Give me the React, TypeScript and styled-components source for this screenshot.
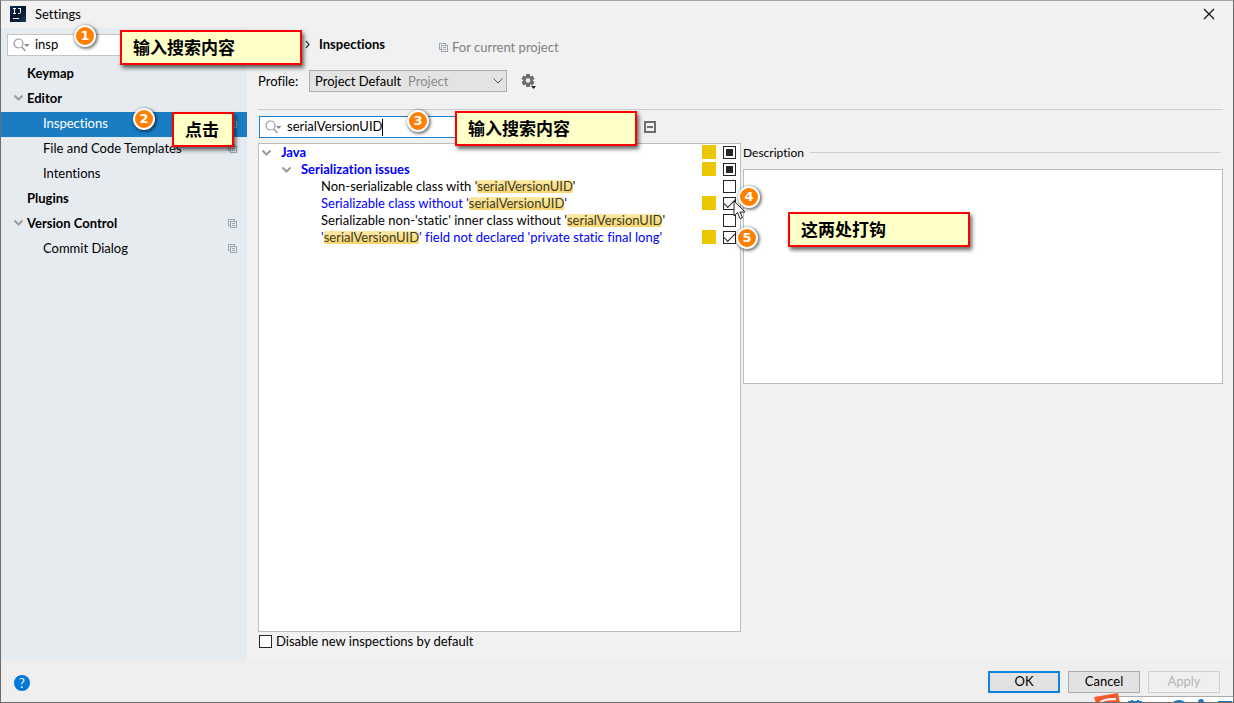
import React, { useEffect, useRef } from "react";
import styled, { createGlobalStyle, css } from "styled-components";

const GlobalStyle = createGlobalStyle`
  * { box-sizing: border-box; }
  body { margin: 0; background: #f1f1f1; font-variant-ligatures: none; }
  body, input, button, select {
    font-family: Lato, "Noto Sans CJK SC", sans-serif;
    font-size: 13px;
    color: #000;
  }
  ul { list-style: none; margin: 0; padding: 0; }
`;

const Window = styled.div`
  position: relative;
  display: flex;
  flex-direction: column;
  min-height: 100vh;
  overflow: hidden;
  background: #f1f1f1;
  border: 1px solid #6c6c6c;
  border-top-color: #a3a3a3;
`;

const TitleBar = styled.header`
  display: flex;
  align-items: center;
  gap: 9px;
  height: 27px;
  padding: 0 18px 1px 9px;
`;

const Title = styled.h1`
  flex: 1;
  margin: 0;
  font-size: 13px;
  font-weight: 400;
`;

const PlainButton = styled.button`
  display: flex;
  padding: 0;
  border: 0;
  background: none;
`;

const Body = styled.div`
  display: flex;
  flex: 1;
`;

const Sidebar = styled.nav`
  width: 246px;
  flex: none;
  padding-top: 6px;
  background: #e6ebf0;
`;

const Field = styled.label<{ $focused?: boolean }>`
  display: flex;
  align-items: center;
  height: 22px;
  padding-left: 5px;
  background: #fff;
  border: 1px solid ${(p) => (p.$focused ? "#1883d7" : "#c4c4c4")};
`;

const SideSearch = styled.div`
  margin: 0 6px 6px;
`;

const FieldInput = styled.input`
  field-sizing: content;
  height: 20px;
  margin-left: 5px;
  padding: 0 0 2px;
  border: 0;
  outline: 0;
  background: none;
`;

const Caret = styled.span`
  width: 1px;
  height: 17px;
  background: #000;
`;

const NavLink = styled.a<{ $level: number; $bold?: boolean; $selected?: boolean }>`
  display: flex;
  align-items: center;
  height: 25px;
  padding: 0 10px 3px ${(p) => (p.$level === 0 ? 12 : 42)}px;
  color: ${(p) => (p.$selected ? "#fff" : "#000")};
  background: ${(p) => (p.$selected ? "#1a7dc4" : "transparent")};
  font-weight: ${(p) => (p.$bold ? 700 : 400)};
  text-decoration: none;
`;

const NavText = styled.span`
  flex: 1;
`;

const Twisty = styled.span`
  display: flex;
  width: 14px;
  flex: none;
`;

const Main = styled.main`
  display: flex;
  flex: 1;
  flex-direction: column;
  min-width: 0;
  padding: 0 10px 0 11px;
`;

const Crumbs = styled.div`
  display: flex;
  align-items: center;
  height: 42px;
  padding: 0 0 10px 46px;
`;

const CrumbTitle = styled.h2`
  width: 112px;
  margin: 0 0 0 8px;
  font-size: 13px;
  font-weight: 700;
`;

const ScopeNote = styled.span`
  display: flex;
  align-items: center;
  gap: 4px;
  margin-left: 8px;
  padding-top: 6px;
  color: #808080;
`;

const ProfileRow = styled.div`
  display: flex;
  align-items: center;
  height: 22px;
`;

const ProfileLabel = styled.label`
  width: 51px;
`;

const SelectBox = styled.div`
  display: grid;
  align-items: center;
  width: 198px;
  margin-right: 13px;
  > * { grid-area: 1 / 1; }
  > svg { justify-self: end; margin-right: 4px; pointer-events: none; }
`;

const Select = styled.select`
  width: 100%;
  height: 22px;
  padding: 0 0 0 5px;
  appearance: none;
  background: #e3e3e3;
  border: 1px solid #adadad;
  border-radius: 0;
`;

const SelectHint = styled.span`
  padding-left: 99px;
  color: #8c8c8c;
  pointer-events: none;
`;

const Rule = styled.hr`
  width: 100%;
  margin: 17px 0 6px;
  border: 0;
  border-top: 1px solid #cdcdcd;
`;

const Split = styled.div`
  display: flex;
  flex: 1;
  gap: 2px;
`;

const Inspections = styled.section`
  display: flex;
  flex-direction: column;
  width: 483px;
  flex: none;
`;

const FilterRow = styled.div`
  display: flex;
  align-items: center;
  gap: 7px;
  padding-left: 1px;
  margin-bottom: 5px;
  > label { width: 378px; }
`;

const Tree = styled.ul`
  && { padding: 0 4px 0 2px; }
  flex: 1;
  background: #fff;
  border: 1px solid #bdbdbd;
`;

const TreeRow = styled.li<{ $level: number; $blue?: boolean; $bold?: boolean }>`
  display: flex;
  align-items: center;
  height: 17px;
  line-height: 17px;
  padding-left: ${(p) => p.$level * 20}px;
  color: ${(p) => (p.$blue ? "#0000ff" : "#000")};
  font-weight: ${(p) => (p.$bold ? 700 : 400)};
  white-space: nowrap;
`;

const TreeText = styled.label`
  flex: 1;
`;

const TreeTwisty = styled(Twisty)`
  width: 20px;
`;

const Mark = styled.mark`
  display: inline-block;
  height: 13px;
  line-height: 13px;
  color: #3b3b2a;
  background: linear-gradient(#fbe9a6, #f8d56c);
  border-radius: 2px;
`;

const Severity = styled.span`
  width: 14px;
  height: 14px;
  margin: 0 7px 2px 0;
  background: #ebc700;
`;

const box = css`
  width: 13px;
  height: 13px;
  flex: none;
  margin: 0;
  appearance: none;
  border: 1px solid #262626;
  background: #fff;
`;

const CheckInput = styled.input`
  ${box}
  display: grid;
  place-items: center;
  &:indeterminate::after {
    content: "";
    width: 7px;
    height: 7px;
    background: #262626;
  }
  &:checked::after {
    content: "";
    width: 10px;
    height: 5px;
    border: solid #262626;
    border-width: 0 0 1px 1px;
    transform: translateY(-2px) rotate(-45deg);
  }
`;

const DisableRow = styled.label`
  display: flex;
  align-items: center;
  gap: 4px;
  height: 29px;
  padding: 0 0 11px 1px;
`;

const Details = styled.section`
  flex: 1;
  min-width: 0;
  padding-top: 28px;
`;

const DetailsHead = styled.h3`
  display: flex;
  align-items: center;
  gap: 6px;
  height: 17px;
  margin: 0 3px 8px 0;
  font-size: 12px;
  font-weight: 400;
  &::after {
    content: "";
    flex: 1;
    height: 1px;
    background: #cdcdcd;
  }
`;

const DetailsBox = styled.div`
  height: 215px;
  background: #fff;
  border: 1px solid #bdbdbd;
`;

const Footer = styled.footer`
  display: flex;
  align-items: center;
  gap: 8px;
  height: 41px;
  padding: 0 13px 0 13px;
  background: #efefef;
`;

const Help = styled.button`
  width: 16px;
  height: 16px;
  margin: 2px auto 0 0;
  padding: 0;
  border: 0;
  border-radius: 50%;
  background: #0078d7;
  color: #fff;
  font-size: 13px;
  line-height: 16px;
`;

const DialogButton = styled.button<{ $primary?: boolean }>`
  width: 72px;
  height: 22px;
  padding: 0 0 1px;
  line-height: 17px;
  background: #e2e2e2;
  border: ${(p) => (p.$primary ? "2px solid #0f82dc" : "1px solid #adadad")};
  &:disabled {
    color: #b5b5b5;
    background: #efefef;
    border-color: #cfcfcf;
  }
`;

const Callout = styled.div<{ $x: number; $y: number; $w: number }>`
  position: absolute;
  left: ${(p) => p.$x}px;
  top: ${(p) => p.$y}px;
  width: ${(p) => p.$w}px;
  height: 35px;
  padding-left: 11px;
  border: 2px solid #f00;
  background: #ffffc8;
  box-shadow: 2px 3px 4px rgba(0, 0, 0, 0.6);
  font: 700 17px/30px "Noto Sans CJK SC", sans-serif;
`;

const Badge = styled.div<{ $x: number; $y: number }>`
  position: absolute;
  left: ${(p) => p.$x}px;
  top: ${(p) => p.$y}px;
  width: 22px;
  height: 22px;
  border: 2px solid #fff;
  border-radius: 50%;
  background: #ff8000;
  box-shadow: 1px 1px 3px 1px rgba(0, 0, 0, 0.5);
  color: #fff;
  font: 700 13px/18px "DejaVu Sans", sans-serif;
  text-align: center;
`;

const Pointer = styled.svg`
  position: absolute;
  left: 732px;
  top: 199px;
`;

const ImeBar = styled.svg`
  position: absolute;
  right: -1px;
  bottom: -1px;
`;

const SearchIcon = () => (
  <svg width="17" height="14" viewBox="0 0 17 14" fill="none" stroke="#9a9a9a">
    <circle cx="5.5" cy="5.5" r="4.5" strokeWidth="1.2" />
    <path d="M8.8 9l3.6 4" strokeWidth="1.5" />
    <path d="M11 6h5.5l-2.75 3z" fill="#8c8c8c" stroke="none" />
  </svg>
);

const Chevron = () => (
  <svg width="11" height="8" viewBox="0 0 11 8" fill="none" stroke="#9b9b9b" strokeWidth="2">
    <path d="M1.500 1.500l4 4 4-4" />
  </svg>
);

const CopyIcon = () => (
  <svg width="9" height="9" viewBox="0 0 9 9" fill="none" stroke="#9aa7b0" shapeRendering="crispEdges">
    <path d="M2.5 2.5h6v6h-6zM2 6.5H.5v-6h6V2M4 4.5h3M4 6.5h3" />
  </svg>
);

const AppLogo = () => (
  <svg width="16" height="16" viewBox="0 0 16 16">
    <defs>
      <linearGradient id="logo" x1="0" y1="0" x2="1" y2="1">
        <stop offset="0" stopColor="#0b2f63" />
        <stop offset="0.5" stopColor="#061425" />
        <stop offset="1" stopColor="#153a66" />
      </linearGradient>
    </defs>
    <rect width="16" height="16" fill="url(#logo)" />
    <path d="M3 2.500h3M4.500 2.500v5M3 7.500h3M8 2.500h3M10.500 2.500v4q0 1-1 1h-1.500" fill="none" stroke="#fff" />
    <path d="M3 12.500h6" stroke="#fff" />
  </svg>
);

const Gear = () => (
  <svg width="17" height="17" viewBox="0 0 17 17">
    <g fill="#6e6e6e">
      {[0, 60, 120].map((a) => (
        <rect key={a} x="6" y="1" width="4" height="13" transform={`rotate(${a} 8 7.500)`} />
      ))}
      <circle cx="8" cy="7.500" r="5" />
    </g>
    <circle cx="8" cy="7.500" r="2.300" fill="#f1f1f1" />
    <path d="M11 13h5l-2.500 3z" fill="#222" />
  </svg>
);

type CheckState = "on" | "off" | "mixed";

const Check = ({ id, state }: { id: string; state: CheckState }) => {
  const ref = useRef<HTMLInputElement>(null);
  useEffect(() => {
    if (ref.current) ref.current.indeterminate = state === "mixed";
  }, [state]);
  return <CheckInput ref={ref} id={id} type="checkbox" defaultChecked={state === "on"} />;
};

type NavItem = { text: string; level: number; bold?: boolean; open?: boolean; copy?: boolean; selected?: boolean };

const nav: NavItem[] = [
  { text: "Keymap", level: 0, bold: true },
  { text: "Editor", level: 0, bold: true, open: true },
  { text: "Inspections", level: 1, copy: true, selected: true },
  { text: "File and Code Templates", level: 1, copy: true },
  { text: "Intentions", level: 1 },
  { text: "Plugins", level: 0, bold: true },
  { text: "Version Control", level: 0, bold: true, open: true, copy: true },
  { text: "Commit Dialog", level: 1, copy: true },
];

type Inspection = {
  level: number;
  before: string;
  hit?: string;
  after?: string;
  blue?: boolean;
  group?: boolean;
  severity?: boolean;
  state: CheckState;
};

const UID = "serialVersionUID";

const inspections: Inspection[] = [
  { level: 0, before: "Java", blue: true, group: true, severity: true, state: "mixed" },
  { level: 1, before: "Serialization issues", blue: true, group: true, severity: true, state: "mixed" },
  { level: 3, before: "Non-serializable class with '", hit: UID, after: "'", state: "off" },
  { level: 3, before: "Serializable class without '", hit: UID, after: "'", blue: true, severity: true, state: "on" },
  { level: 3, before: "Serializable non-'static' inner class without '", hit: UID, after: "'", state: "off" },
  { level: 3, before: "'", hit: UID, after: "' field not declared 'private static final long'", blue: true, severity: true, state: "on" },
];

export default function App() {
  return (
    <>
      <GlobalStyle />
      <Window>
        <TitleBar>
          <AppLogo />
          <Title>Settings</Title>
          <PlainButton aria-label="Close">
            <svg width="12" height="12" viewBox="0 0 12 12" stroke="#111" strokeWidth="1.200">
              <path d="M1 1l10 10M11 1L1 11" />
            </svg>
          </PlainButton>
        </TitleBar>

        <Body>
          <Sidebar>
            <SideSearch>
              <Field>
                <SearchIcon />
                <FieldInput aria-label="Search settings" defaultValue="insp" />
              </Field>
            </SideSearch>
            <ul>
              {nav.map((n) => (
                <li key={n.text}>
                  <NavLink href="#" $level={n.level} $bold={n.bold} $selected={n.selected}>
                    {n.level === 0 && <Twisty>{n.open && <Chevron />}</Twisty>}
                    <NavText>{n.text}</NavText>
                    {n.copy && <CopyIcon />}
                  </NavLink>
                </li>
              ))}
            </ul>
          </Sidebar>

          <Main>
            <Crumbs>
              <svg width="7" height="9" viewBox="0 0 7 9" fill="none" stroke="#333" strokeWidth="1.200">
                <path d="M2 1l3 3.500L2 8" />
              </svg>
              <CrumbTitle>Inspections</CrumbTitle>
              <ScopeNote>
                <CopyIcon />
                For current project
              </ScopeNote>
            </Crumbs>
            <ProfileRow>
              <ProfileLabel htmlFor="profile">Profile:</ProfileLabel>
              <SelectBox>
                <Select id="profile">
                  <option>Project Default</option>
                </Select>
                <SelectHint>Project</SelectHint>
                <svg width="10" height="6" viewBox="0 0 10 6" fill="none" stroke="#555">
                  <path d="M.5.5L5 5 9.500.5" />
                </svg>
              </SelectBox>
              <PlainButton aria-label="Profile actions">
                <Gear />
              </PlainButton>
            </ProfileRow>
            <Rule />
            <Split>
              <Inspections>
                <FilterRow>
                  <Field $focused>
                    <SearchIcon />
                    <FieldInput aria-label="Search inspections" defaultValue={UID} />
                    <Caret />
                  </Field>
                  <PlainButton aria-label="Collapse all">
                    <svg width="12" height="12" viewBox="0 0 12 12" fill="none" stroke="#6e6e6e" strokeWidth="2">
                      <path d="M1 1h10v10H1zM3 6h6" />
                    </svg>
                  </PlainButton>
                </FilterRow>
                <Tree>
                  {inspections.map((r, i) => (
                    <TreeRow key={i} $level={r.level} $blue={r.blue} $bold={r.group}>
                      {r.group && (
                        <TreeTwisty>
                          <Chevron />
                        </TreeTwisty>
                      )}
                      <TreeText htmlFor={`inspection-${i}`}>
                        {r.before}
                        {r.hit && <Mark>{r.hit}</Mark>}
                        {r.after}
                      </TreeText>
                      {r.severity && <Severity />}
                      <Check id={`inspection-${i}`} state={r.state} />
                    </TreeRow>
                  ))}
                </Tree>
                <DisableRow>
                  <Check id="disable-new" state="off" />
                  Disable new inspections by default
                </DisableRow>
              </Inspections>
              <Details>
                <DetailsHead>Description</DetailsHead>
                <DetailsBox />
              </Details>
            </Split>
          </Main>
        </Body>

        <Footer>
          <Help aria-label="Help">?</Help>
          <DialogButton $primary>OK</DialogButton>
          <DialogButton>Cancel</DialogButton>
          <DialogButton disabled>Apply</DialogButton>
        </Footer>

        <Callout $x={119} $y={29} $w={182}>输入搜索内容</Callout>
        <Callout $x={171} $y={111} $w={62}>点击</Callout>
        <Callout $x={454} $y={110} $w={182}>输入搜索内容</Callout>
        <Callout $x={787} $y={211} $w={182}>这两处打钩</Callout>
        <Badge $x={73} $y={24}>1</Badge>
        <Badge $x={132} $y={107}>2</Badge>
        <Badge $x={406} $y={109}>3</Badge>
        <Badge $x={737} $y={185}>4</Badge>
        <Badge $x={735} $y={226}>5</Badge>

        <Pointer width="13" height="20" viewBox="0 0 13 20">
          <path d="M1 1v15l3.500-3.300 2.600 6 2.400-1-2.600-5.700H12z" fill="#fff" stroke="#222" />
        </Pointer>

        <ImeBar width="140" height="10" viewBox="0 0 140 10">
          <path d="M22 3.500h118v7H22z" fill="#fff" stroke="#aaa" />
          <path d="M0 4L24 0l2 10H2z" fill="#f45a2a" />
          <path d="M6 10q2-4 16-4" fill="none" stroke="#fff" strokeWidth="2" />
          <g fill="none" stroke="#1f74c8" strokeWidth="2">
            <path d="M34 9h14M38 7v3M44 7v3M124 9h14" />
            <path d="M78 11q7-6 14 0" />
          </g>
          <circle cx="107" cy="9" r="3" fill="#1f74c8" />
        </ImeBar>
      </Window>
    </>
  );
}
